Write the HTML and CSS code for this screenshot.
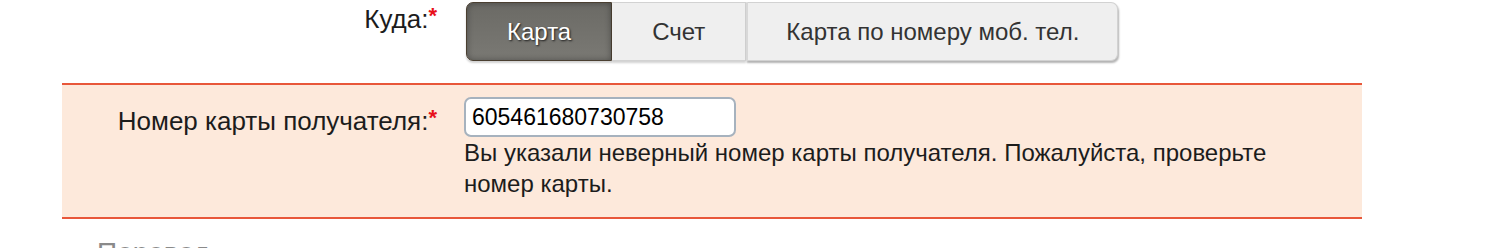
FILE: index.html
```html
<!DOCTYPE html>
<html>
  <head>
    <meta charset="utf-8">
    <link rel="stylesheet" href="styles.css">
  </head>
  <body>
    <div class="form">
      <div class="row">
        <label class="label">Куда:<span class="req">*</span></label>
        <div class="field">
          <div class="seg">
            <button class="seg-btn active">Карта</button>
            <button class="seg-btn">Счет</button>
            <button class="seg-btn last">Карта по номеру моб. тел.</button>
          </div>
        </div>
      </div>

      <div class="row error">
        <label class="label">Номер карты получателя:<span class="req">*</span></label>
        <div class="field">
          <input class="text-input" type="text" value="605461680730758">
          <p class="msg">Вы указали неверный номер карты получателя. Пожалуйста, проверьте номер карты.</p>
        </div>
      </div>
    </div>

    <h2 class="section">Перевод</h2>
  </body>
</html>
```

FILE: styles.css
```css
body {
  margin: 0;
  font-family: "Liberation Sans", Arial, sans-serif;
  font-size: 24px;
  color: #1c1c1c;
  background: #fff;
}

.form {
  margin-left: 62px;
  width: 1300px;
}

.row {
  display: flex;
  gap: 27px;
}

.label {
  width: 375px;
  flex-shrink: 0;
  text-align: right;
  font-size: 26px;
  line-height: 30px;
  padding-top: 1px;
}

.req {
  color: #e8101a;
  font-weight: bold;
  font-size: 22px;
  vertical-align: 5px;
}

.field {
  width: 860px;
}

/* segmented control */
.seg {
  display: flex;
  margin: 2px 0 22px 2px;
}
.seg-btn {
  font-family: inherit;
  font-size: 24px;
  height: 59px;
  padding: 0 40px;
  border: 1px solid #d2d2d2;
  border-left: none;
  background: #efefef;
  color: #333;
  box-shadow: 0 2px 2px rgba(0, 0, 0, 0.18);
  cursor: pointer;
}
.seg-btn.active {
  background: linear-gradient(#6b6a65, #7a7974);
  border: 1px solid #4a3f31;
  border-radius: 7px 0 0 7px;
  color: #fff;
  text-shadow: 1px 1px 2px #1c1c1c;
  box-shadow: inset 0 0 6px rgba(0, 0, 0, 0.35), 0 2px 2px rgba(0, 0, 0, 0.18);
}
.seg-btn.last {
  padding: 0 38px;
  border-left: 2px solid #d8d8d8;
  border-radius: 0 7px 7px 0;
  box-shadow: 1px 2px 2px rgba(0, 0, 0, 0.3);
}

/* error row */
.row.error {
  background: #fde9db;
  border-top: 2px solid #e8573a;
  border-bottom: 2px solid #e8573a;
  padding: 12px 0 18px;
}
.row.error .label {
  padding-top: 6px;
}

.text-input {
  display: block;
  box-sizing: border-box;
  width: 272px;
  height: 40px;
  margin: 0;
  padding: 0 6px;
  border: 2px solid #a6b2be;
  border-radius: 7px;
  background: #fff;
  font-family: inherit;
  font-size: 23px;
  color: #000;
}

.msg {
  margin: 0;
  line-height: 31px;
  max-width: 850px;
}

.section {
  margin: 18px 0 0 97px;
  font-size: 28px;
  font-weight: normal;
  color: #8a8a8a;
}
```
